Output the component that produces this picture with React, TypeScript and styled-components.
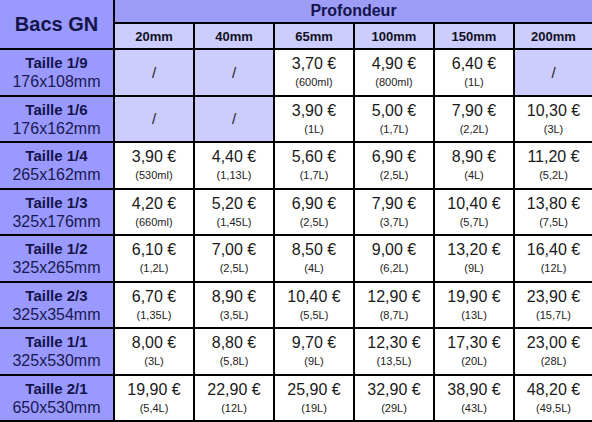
import { createGlobalStyle, styled } from 'styled-components';

type Cell = { price: string; vol: string } | null;

const depths = ['20mm', '40mm', '65mm', '100mm', '150mm', '200mm'];

const rows: { name: string; size: string; cells: Cell[] }[] = [
  {
    name: 'Taille 1/9',
    size: '176x108mm',
    cells: [null, null, { price: '3,70 €', vol: '(600ml)' }, { price: '4,90 €', vol: '(800ml)' }, { price: '6,40 €', vol: '(1L)' }, null],
  },
  {
    name: 'Taille 1/6',
    size: '176x162mm',
    cells: [null, null, { price: '3,90 €', vol: '(1L)' }, { price: '5,00 €', vol: '(1,7L)' }, { price: '7,90 €', vol: '(2,2L)' }, { price: '10,30 €', vol: '(3L)' }],
  },
  {
    name: 'Taille 1/4',
    size: '265x162mm',
    cells: [
      { price: '3,90 €', vol: '(530ml)' },
      { price: '4,40 €', vol: '(1,13L)' },
      { price: '5,60 €', vol: '(1,7L)' },
      { price: '6,90 €', vol: '(2,5L)' },
      { price: '8,90 €', vol: '(4L)' },
      { price: '11,20 €', vol: '(5,2L)' },
    ],
  },
  {
    name: 'Taille 1/3',
    size: '325x176mm',
    cells: [
      { price: '4,20 €', vol: '(660ml)' },
      { price: '5,20 €', vol: '(1,45L)' },
      { price: '6,90 €', vol: '(2,5L)' },
      { price: '7,90 €', vol: '(3,7L)' },
      { price: '10,40 €', vol: '(5,7L)' },
      { price: '13,80 €', vol: '(7,5L)' },
    ],
  },
  {
    name: 'Taille 1/2',
    size: '325x265mm',
    cells: [
      { price: '6,10 €', vol: '(1,2L)' },
      { price: '7,00 €', vol: '(2,5L)' },
      { price: '8,50 €', vol: '(4L)' },
      { price: '9,00 €', vol: '(6,2L)' },
      { price: '13,20 €', vol: '(9L)' },
      { price: '16,40 €', vol: '(12L)' },
    ],
  },
  {
    name: 'Taille 2/3',
    size: '325x354mm',
    cells: [
      { price: '6,70 €', vol: '(1,35L)' },
      { price: '8,90 €', vol: '(3,5L)' },
      { price: '10,40 €', vol: '(5,5L)' },
      { price: '12,90 €', vol: '(8,7L)' },
      { price: '19,90 €', vol: '(13L)' },
      { price: '23,90 €', vol: '(15,7L)' },
    ],
  },
  {
    name: 'Taille 1/1',
    size: '325x530mm',
    cells: [
      { price: '8,00 €', vol: '(3L)' },
      { price: '8,80 €', vol: '(5,8L)' },
      { price: '9,70 €', vol: '(9L)' },
      { price: '12,30 €', vol: '(13,5L)' },
      { price: '17,30 €', vol: '(20L)' },
      { price: '23,00 €', vol: '(28L)' },
    ],
  },
  {
    name: 'Taille 2/1',
    size: '650x530mm',
    cells: [
      { price: '19,90 €', vol: '(5,4L)' },
      { price: '22,90 €', vol: '(12L)' },
      { price: '25,90 €', vol: '(19L)' },
      { price: '32,90 €', vol: '(29L)' },
      { price: '38,90 €', vol: '(43L)' },
      { price: '48,20 €', vol: '(49,5L)' },
    ],
  },
];

const App = () => {
  return (
    <>
      <GlobalStyle />
      <Grid>
        <Corner>Bacs GN</Corner>
        <DepthTitle>Profondeur</DepthTitle>
        {depths.map((d) => (
          <DepthCell key={d}>{d}</DepthCell>
        ))}
        {rows.map((row) => (
          <Row key={row.name} row={row} />
        ))}
      </Grid>
    </>
  );
};

const Row = ({ row }: { row: (typeof rows)[number] }) => (
  <>
    <SizeCell>
      <SizeName>{row.name}</SizeName>
      <SizeDim>{row.size}</SizeDim>
    </SizeCell>
    {row.cells.map((c, i) =>
      c ? (
        <PriceCell key={i} $empty={false}>
          <Price>{c.price}</Price>
          <Volume>{c.vol}</Volume>
        </PriceCell>
      ) : (
        <PriceCell key={i} $empty={true}>
          <Slash>/</Slash>
        </PriceCell>
      ),
    )}
  </>
);

const GlobalStyle = createGlobalStyle`
  html, body {
    margin: 0;
    padding: 0;
    background: #ffffff;
  }
  body {
    font-family: 'Liberation Sans', Arial, sans-serif;
  }
`;

const Grid = styled.div`
  display: grid;
  width: 592px;
  height: 422px;
  box-sizing: border-box;
  padding-bottom: 2px;
  background: #000000;
  grid-template-columns: 113px repeat(5, 78px) 77px;
  grid-template-rows: 22px 24px repeat(8, 1fr);
  gap: 2px;
`;

const Corner = styled.div`
  grid-row: 1 / span 2;
  background: #9999ff;
  color: #14144a;
  font-size: 20px;
  font-weight: 700;
  display: flex;
  align-items: center;
  justify-content: center;
`;

const DepthTitle = styled.div`
  grid-column: 2 / span 6;
  background: #9d9df8;
  color: #14144a;
  font-size: 16px;
  font-weight: 700;
  display: flex;
  align-items: center;
  justify-content: center;
`;

const DepthCell = styled.div`
  background: #ccccff;
  color: #111122;
  font-size: 13px;
  font-weight: 700;
  display: flex;
  align-items: center;
  justify-content: center;
`;

const SizeCell = styled.div`
  background: #9999ff;
  display: flex;
  flex-direction: column;
  align-items: center;
  justify-content: center;
  color: #14144a;
`;

const SizeName = styled.div`
  font-size: 15px;
  font-weight: 700;
  line-height: 19px;
`;

const SizeDim = styled.div`
  font-size: 16px;
  line-height: 19px;
  color: #1a1a50;
`;

const PriceCell = styled.div<{ $empty: boolean }>`
  background: ${({ $empty }) => ($empty ? '#ccccff' : '#ffffff')};
  display: flex;
  flex-direction: column;
  align-items: center;
  justify-content: center;
  color: #1a1a1a;
`;

const Price = styled.div`
  font-size: 16px;
  line-height: 18px;
`;

const Volume = styled.div`
  font-size: 11px;
  line-height: 14px;
  margin-top: 2px;
  color: #222222;
`;

const Slash = styled.div`
  font-size: 15px;
  color: #222222;
`;

export default App;
